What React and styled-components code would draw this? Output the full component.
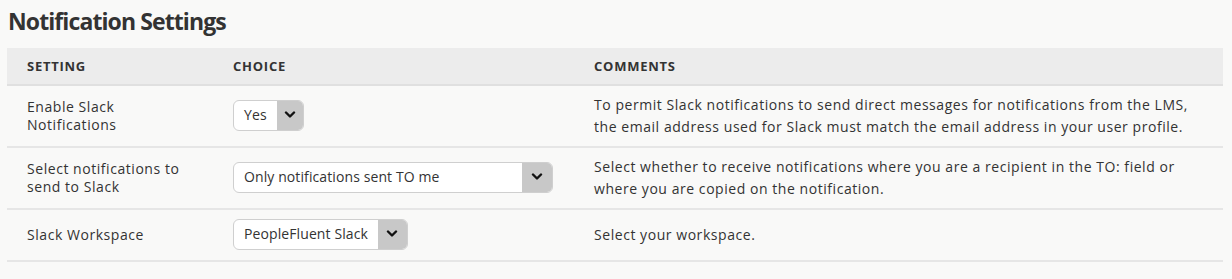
import React from "react";
import styled, { createGlobalStyle } from "styled-components";

const Global = createGlobalStyle`
  html, body { margin: 0; padding: 0; background: #f9f9f8; }
  body { font-family: "Open Sans", "Liberation Sans", sans-serif; color: #333; }
`;

const Page = styled.div`
  padding: 6px 9px 0 7px;
`;

const Title = styled.h1`
  margin: 0 0 12px 1px;
  font-size: 23px;
  line-height: 30px;
  font-weight: 700;
  letter-spacing: -0.9px;
  color: #333;
`;

const Table = styled.div`
  display: grid;
  grid-template-columns: 206px 361px 1fr;
`;

const HeadCell = styled.div`
  background: #ececec;
  border-bottom: 2px solid #e0e0e0;
  padding: 0 20px;
  height: 36px;
  display: flex;
  align-items: center;
  font-size: 13px;
  font-weight: 700;
  text-transform: uppercase;
  letter-spacing: 0.75px;
  color: #333;
`;

const Cell = styled.div`
  border-bottom: 2px solid #e6e6e6;
  padding: 0 20px;
  min-height: ${(p) => p.$h}px;
  display: flex;
  align-items: center;
  font-size: 14px;
  letter-spacing: 0.55px;
  line-height: ${(p) => (p.$comment ? "22px" : "18px")};
  color: #333;
`;

const SelectBox = styled.div`
  display: inline-flex;
  align-items: stretch;
  height: 31px;
  width: ${(p) => p.$w}px;
  border: 1px solid #cfcfcf;
  border-radius: 6px;
  overflow: hidden;
  background: #fff;
  box-sizing: border-box;
  letter-spacing: 0.1px;
  margin-top: -2px;
`;

const SelectText = styled.div`
  flex: 1;
  display: flex;
  align-items: center;
  padding: 0 10px;
  font-size: 14px;
  color: #333;
  white-space: nowrap;
`;

const Arrow = styled.div`
  width: 30px;
  background: #c8c8c8;
  display: flex;
  align-items: center;
  justify-content: center;
`;

const Chevron = () => (
  <svg width="12" height="8" viewBox="0 0 12 8">
    <path d="M2 1.5 L6 5.5 L10 1.5" fill="none" stroke="#111" strokeWidth="2.4" strokeLinecap="round" strokeLinejoin="round" />
  </svg>
);

const Select = ({ value, width }) => (
  <SelectBox $w={width}>
    <SelectText>{value}</SelectText>
    <Arrow>
      <Chevron />
    </Arrow>
  </SelectBox>
);

const rows = [
  {
    setting: "Enable Slack Notifications",
    value: "Yes",
    width: 71,
    comment:
      "To permit Slack notifications to send direct messages for notifications from the LMS, the email address used for Slack must match the email address in your user profile.",
    h: 60,
  },
  {
    setting: "Select notifications to send to Slack",
    value: "Only notifications sent TO me",
    width: 320,
    comment:
      "Select whether to receive notifications where you are a recipient in the TO: field or where you are copied on the notification.",
    h: 60,
  },
  {
    setting: "Slack Workspace",
    value: "PeopleFluent Slack",
    width: 175,
    comment: "Select your workspace.",
    h: 50,
  },
];

export default function App() {
  return (
    <>
      <Global />
      <Page>
        <Title>Notification Settings</Title>
        <Table>
          <HeadCell>Setting</HeadCell>
          <HeadCell>Choice</HeadCell>
          <HeadCell>Comments</HeadCell>
          {rows.map((r) => (
            <React.Fragment key={r.setting}>
              <Cell $h={r.h}>{r.setting}</Cell>
              <Cell $h={r.h}>
                <Select value={r.value} width={r.width} />
              </Cell>
              <Cell $h={r.h} $comment>
                {r.comment}
              </Cell>
            </React.Fragment>
          ))}
        </Table>
      </Page>
    </>
  );
}
